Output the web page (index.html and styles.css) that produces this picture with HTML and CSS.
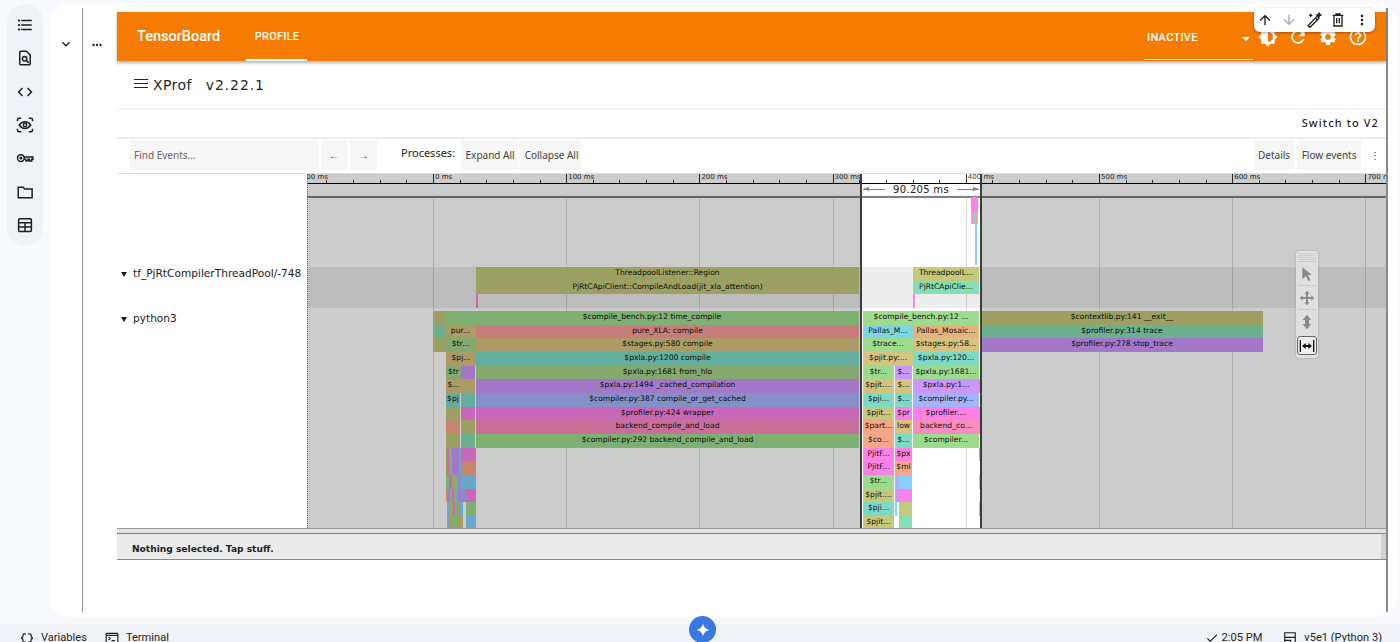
FILE: index.html
```html
<!DOCTYPE html>
<html lang="en">
<head>
    <meta charset="UTF-8">
    <meta name="viewport" content="width=device-width, initial-scale=1.0">
    <title>XProf trace viewer</title>
    <link rel="stylesheet" href="styles.css">
</head>
<body>

<div class="workspace">
    <nav class="rail">
        <svg viewBox="0 0 24 24"><path d="M4 10.5c-.83 0-1.5.67-1.5 1.5s.67 1.5 1.5 1.5 1.5-.67 1.5-1.5-.67-1.5-1.5-1.5zm0-6c-.83 0-1.5.67-1.5 1.5S3.17 7.5 4 7.5 5.5 6.83 5.5 6 4.83 4.5 4 4.5zm0 12c-.83 0-1.5.68-1.5 1.5s.68 1.5 1.5 1.5 1.5-.68 1.5-1.5-.67-1.5-1.5-1.5zM7 19h14v-2H7v2zm0-6h14v-2H7v2zm0-8v2h14V5H7z"/></svg>
        <svg viewBox="0 0 24 24" class="line"><path d="M14 3H6.5A1.5 1.5 0 0 0 5 4.5v15A1.5 1.5 0 0 0 6.5 21h11a1.5 1.5 0 0 0 1.5-1.5V8z"/><circle cx="11.5" cy="13" r="3"/><path d="M14 15.5l3 3"/></svg>
        <svg viewBox="0 0 24 24"><path d="M9.4 16.6L4.8 12l4.6-4.6L8 6l-6 6 6 6 1.4-1.4zm5.2 0l4.6-4.6-4.6-4.6L16 6l6 6-6 6-1.4-1.4z"/></svg>
        <svg viewBox="0 0 24 24" class="line"><path d="M2 7V5a2 2 0 0 1 2-2h3M17 3h3a2 2 0 0 1 2 2v2M22 17v2a2 2 0 0 1-2 2h-3M7 21H4a2 2 0 0 1-2-2v-2"/><path d="M4.500 12c1.800-3 4.500-4.500 7.500-4.500s5.700 1.500 7.500 4.500c-1.800 3-4.500 4.500-7.500 4.500S6.300 15 4.500 12z"/><circle cx="12" cy="12" r="2.200"/></svg>
        <svg viewBox="0 0 24 24" class="line"><circle cx="6.500" cy="12" r="4.500"/><circle cx="6.500" cy="12" r="1"/><path d="M11 10.500h11.500v3H21v2.500h-3v-2.500h-2v2h-3v-2h-2"/></svg>
        <svg viewBox="0 0 24 24" class="line"><path d="M3 5.500h6.500l2 2.500H21.500v11.500H3z"/></svg>
        <svg viewBox="0 0 24 24" class="line"><rect x="3.500" y="3.500" width="17" height="17" rx="1.500"/><path d="M3.500 9h17M3.500 14.800h17M12 9v11.500"/></svg>
    </nav>

    <main class="notebook">
        <div class="cell-gutter">
            <svg viewBox="0 0 24 24"><path d="M16.59 8.59L12 13.17 7.41 8.59 6 10l6 6 6-6z"/></svg>
        </div>
        <div class="cell-body">
            <div class="cell-menu">
                <svg viewBox="0 0 24 24"><path d="M6 10c-1.100 0-2 .9-2 2s.9 2 2 2 2-.9 2-2-.9-2-2-2zm12 0c-1.100 0-2 .9-2 2s.9 2 2 2 2-.9 2-2-.9-2-2-2zm-6 0c-1.100 0-2 .9-2 2s.9 2 2 2 2-.9 2-2-.9-2-2-2z"/></svg>
            </div>
            <div class="output">
                <header class="tb-bar">
                    <span class="tb-logo">TensorBoard</span>
                    <span class="tb-tab">PROFILE</span>
                    <span class="tb-select">INACTIVE<i class="caret"></i></span>
                    <div class="tb-icons">
                        <svg viewBox="0 0 24 24"><path d="M20 15.31L23.31 12 20 8.69V4h-4.690L12 .69 8.690 4H4v4.690L.69 12 4 15.31V20h4.690L12 23.31 15.31 20H20v-4.690zM12 18V6c3.310 0 6 2.690 6 6s-2.690 6-6 6z"/></svg>
                        <svg viewBox="0 0 24 24"><path d="M17.65 6.35C16.2 4.9 14.21 4 12 4c-4.42 0-7.99 3.58-7.99 8s3.57 8 7.99 8c3.73 0 6.84-2.55 7.73-6h-2.08c-.82 2.33-3.04 4-5.65 4-3.31 0-6-2.69-6-6s2.69-6 6-6c1.66 0 3.14.69 4.22 1.78L13 11h7V4l-2.35 2.35z"/></svg>
                        <svg viewBox="0 0 24 24"><path d="M19.14 12.94c.04-.3.06-.61.06-.94 0-.32-.02-.64-.07-.94l2.03-1.58c.18-.14.23-.41.12-.61l-1.92-3.32c-.12-.22-.37-.29-.59-.22l-2.39.96c-.5-.38-1.03-.7-1.62-.94l-.36-2.54c-.04-.24-.24-.41-.48-.41h-3.84c-.24 0-.43.17-.47.41l-.36 2.54c-.59.24-1.13.57-1.62.94l-2.39-.96c-.22-.08-.47 0-.59.22L2.74 8.87c-.12.21-.08.47.12.61l2.03 1.58c-.05.3-.09.63-.09.94s.02.64.07.94l-2.03 1.58c-.18.14-.23.41-.12.61l1.92 3.32c.12.22.37.29.59.22l2.39-.96c.5.38 1.03.7 1.62.94l.36 2.54c.05.24.24.41.48.41h3.84c.24 0 .44-.17.47-.41l.36-2.54c.59-.24 1.13-.56 1.62-.94l2.39.96c.22.08.47 0 .59-.22l1.92-3.32c.12-.22.07-.47-.12-.61l-2.01-1.58zM12 15.6c-1.98 0-3.6-1.62-3.6-3.6s1.62-3.6 3.6-3.6 3.6 1.62 3.6 3.6-1.62 3.6-3.6 3.6z"/></svg>
                        <svg viewBox="0 0 24 24"><path d="M11 18h2v-2h-2v2zm1-16C6.48 2 2 6.48 2 12s4.48 10 10 10 10-4.48 10-10S17.52 2 12 2zm0 18c-4.41 0-8-3.59-8-8s3.59-8 8-8 8 3.59 8 8-3.59 8-8 8zm0-14c-2.21 0-4 1.79-4 4h2c0-1.1.9-2 2-2s2 .9 2 2c0 2-3 1.75-3 5h2c0-2.25 3-2.5 3-5 0-2.21-1.79-4-4-4z"/></svg>
                    </div>
                </header>

                <div class="xprof-title">
                    <i class="hamburger"></i>
                    <span>XProf</span>
                    <span class="xprof-version">v2.22.1</span>
                </div>

                <div class="switch-row">Switch to V2</div>

                <div class="trace-tools">
                    <span class="find-box">Find Events...</span>
                    <span class="tool-btn arrow-btn">←</span>
                    <span class="tool-btn arrow-btn next">→</span>
                    <span class="processes">Processes:</span>
                    <span class="tool-btn expand">Expand All</span>
                    <span class="tool-btn collapse">Collapse All</span>
                    <span class="tool-btn details">Details</span>
                    <span class="tool-btn flow">Flow events</span>
                    <span class="tool-more">⋮</span>
                </div>

                <div class="timeline">
                    <div class="track-labels">
                        <div class="label-row first"></div>
                        <div class="label-row tf"><i class="twisty"></i>tf_PjRtCompilerThreadPool/-748</div>
                        <div class="label-row py"><i class="twisty"></i>python3</div>
                    </div>
                    <div class="canvas" id="canvas">
                        <div class="ruler-layer" id="ruler"></div>
                        <div class="grid-layer" id="grid"></div>
                        <div class="ruler-band"></div>
                        <div class="track top" id="trackTop"></div>
                        <div class="track tf" id="trackTf"></div>
                        <div class="track py" id="trackPy"></div>
                        <div class="dim dim-left"></div>
                        <div class="dim dim-right"></div>
                        <div class="sel-line sel-a"></div>
                        <div class="sel-line sel-b"></div>
                        <div class="measure">
                            <i class="measure-arrow"></i>
                            <span>90.205 ms</span>
                            <i class="measure-arrow flip"></i>
                        </div>
                        <div class="start-line"></div>
                        <div class="mouse-tools">
                            <div class="grip"></div>
                            <div class="mouse-btn">
                                <svg viewBox="0 0 24 24"><path d="M5 2l14 11-5.500 1 3.500 7-3 1.500-3.500-7.500L5 20z"/></svg>
                            </div>
                            <div class="mouse-btn">
                                <svg viewBox="0 0 24 24"><path d="M12 1l4 4.500h-2.500v5h5V8l4.500 4-4.500 4v-2.500h-5v5H16L12 23l-4-4.500h2.500v-5h-5V16L1 12l4.500-4v2.500h5v-5H8z"/></svg>
                            </div>
                            <div class="mouse-btn">
                                <svg viewBox="0 0 24 24"><path d="M12 1l6.500 8H15v6h3.500L12 23l-6.500-8H9V9H5.500z"/></svg>
                            </div>
                            <div class="mouse-btn active">
                                <svg viewBox="0 0 24 24"><path d="M1 3h2v18H1zM21 3h2v18h-2zM4.500 12L10 7.500V10.500h4V7.500l5.500 4.500-5.500 4.500v-3h-4v3z"/></svg>
                            </div>
                        </div>
                    </div>
                </div>

                <div class="detail-pane">
                    <div class="detail-split"></div>
                    <div class="detail-body">
                        <span>Nothing selected. Tap stuff.</span>
                        <i class="detail-scroll"></i>
                    </div>
                </div>

                <div class="cell-toolbar">
                    <svg viewBox="0 0 24 24"><path d="M4 12l1.410 1.410L11 7.830V20h2V7.830l5.580 5.590L20 12l-8-8-8 8z"/></svg>
                    <svg viewBox="0 0 24 24" class="off"><path d="M20 12l-1.410-1.410L13 16.170V4h-2v12.170l-5.580-5.590L4 12l8 8 8-8z"/></svg>
                    <svg viewBox="0 0 24 24" class="line"><path d="M3 20.500L16.500 6.500l3 3L6 23zM14 9l3 3M19.500 1.500l.8 2.200 2.200.8-2.200.8-.8 2.200-.8-2.200-2.200-.8 2.200-.8zM7 2.500v5M4.500 5h5"/></svg>
                    <svg viewBox="0 0 24 24" class="line"><path d="M4 5h16M9 5V3h6v2M6 5v16h12V5M10 9v8M14 9v8"/></svg>
                    <svg viewBox="0 0 24 24"><path d="M12 8c1.100 0 2-.9 2-2s-.9-2-2-2-2 .9-2 2 .9 2 2 2zm0 2c-1.100 0-2 .9-2 2s.9 2 2 2 2-.9 2-2-.9-2-2-2zm0 6c-1.100 0-2 .9-2 2s.9 2 2 2 2-.9 2-2-.9-2-2-2z"/></svg>
                </div>
            </div>
        </div>
    </main>
</div>

<footer class="status-bar">
    <span class="status-item">
        <svg viewBox="0 0 24 24"><path d="M4 7v2c0 .55-.45 1-1 1H2v4h1c.55 0 1 .45 1 1v2c0 1.650 1.350 3 3 3h3v-2H7c-.55 0-1-.45-1-1v-2c0-1.300-.84-2.420-2-2.830v-.34C5.160 11.420 6 10.300 6 9V7c0-.55.45-1 1-1h3V4H7C5.350 4 4 5.350 4 7zM21 10c-.55 0-1-.45-1-1V7c0-1.650-1.350-3-3-3h-3v2h3c.55 0 1 .45 1 1v2c0 1.300.84 2.420 2 2.830v.34c-1.160.41-2 1.520-2 2.830v2c0 .55-.45 1-1 1h-3v2h3c1.650 0 3-1.350 3-3v-2c0-.55.45-1 1-1h1v-4h-1z"/></svg>
        Variables
    </span>
    <span class="status-item">
        <svg viewBox="0 0 24 24" class="line"><rect x="2" y="4" width="20" height="16" rx="1"/><path d="M2 7.500h20" /><path d="M6 10.500l3 2.500-3 2.500M11 16.500h6"/></svg>
        Terminal
    </span>
    <span class="status-spacer"></span>
    <span class="status-item check">
        <svg viewBox="0 0 24 24"><path d="M9 16.170L4.830 12l-1.420 1.410L9 19 21 7l-1.410-1.410z"/></svg>
        2:05 PM
    </span>
    <span class="status-item kernel">
        <svg viewBox="0 0 24 24" class="line"><path d="M3 3h18v8H3zM3 11v10M21 11v10M3 16h10v5H3zM6.500 7h.01M6.500 18.500h.01"/></svg>
        v5e1 (Python 3)
    </span>
</footer>

<div class="gemini-btn">
    <svg viewBox="0 0 24 24"><path d="M12 2c.6 5.400 4.600 9.400 10 10-5.400.6-9.400 4.600-10 10-.6-5.400-4.600-9.400-10-10 5.400-.6 9.400-4.600 10-10z"/></svg>
</div>

<script src="timeline.js"></script>

</body>
</html>
```

FILE: styles.css
```css
* {
    box-sizing: border-box;
}

body {
    font-family: 'Noto Sans', sans-serif;
    background-color: #f8fafd;
    margin: 0;
    padding: 0;
    width: 1400px;
    height: 642px;
    overflow: hidden;
    position: relative;
    color: #1f1f1f;
    display: flex;
    flex-direction: column;
}

svg {
    display: block;
    fill: currentColor;
}

svg.line {
    fill: none;
    stroke: currentColor;
    stroke-width: 2;
}

.workspace {
    display: flex;
    align-items: flex-start;
    height: 624px;
    padding-top: 4px;
}

/* Left icon rail */
.rail {
    width: 36px;
    height: 242px;
    margin-left: 7px;
    background-color: #eff3f8;
    border-radius: 18px;
    display: flex;
    flex-direction: column;
    align-items: center;
    justify-content: space-between;
    padding: 12px 0;
}

.rail svg {
    width: 18px;
    height: 18px;
}

/* Notebook card */
.notebook {
    width: 1348px;
    height: 613px;
    margin-left: 6px;
    background-color: #ffffff;
    border-radius: 20px;
    padding: 4px 0 5px;
    display: flex;
}

.cell-gutter {
    width: 33px;
    display: flex;
    justify-content: center;
    padding: 28px 0 0 1px;
}

.cell-gutter svg {
    width: 16px;
    height: 16px;
}

.cell-body {
    display: flex;
    width: 1306px;
    border-left: 1px solid #8a8a8a;
    border-right: 2px solid #8a8a8a;
}

.cell-menu {
    width: 34px;
    display: flex;
    justify-content: center;
    padding: 30px 6px 0 0;
}

.cell-menu svg {
    width: 14px;
    height: 14px;
}

.output {
    width: 1269px;
    padding-top: 4px;
    position: relative;
}

/* TensorBoard header */
.tb-bar {
    height: 49px;
    background-color: #f57c00;
    box-shadow: 0 2px 3px rgba(0, 0, 0, 0.3);
    color: #ffffff;
    display: flex;
    align-items: center;
    font-family: 'Roboto', sans-serif;
    position: relative;
}

.tb-logo {
    font-size: 14.500px;
    font-weight: 500;
    margin-left: 20px;
    width: 109px;
}

.tb-tab {
    height: 49px;
    width: 61px;
    font-size: 11px;
    font-weight: 500;
    letter-spacing: 0.2px;
    line-height: 50px;
    text-align: center;
    padding-left: 1px;
    border-bottom: 2px solid #ffffff;
}

.tb-select {
    width: 109px;
    height: 46px;
    margin: 0 0 0 837px;
    padding-left: 3px;
    font-size: 11px;
    font-weight: 500;
    letter-spacing: 0.3px;
    line-height: 48px;
    border-bottom: 1px solid #ffffff;
    position: relative;
}

.caret {
    position: absolute;
    right: 3px;
    top: 23px;
    border-left: 4px solid transparent;
    border-right: 4px solid transparent;
    border-top: 4px solid #ffffff;
}

.tb-icons {
    display: flex;
    gap: 10px;
    margin-left: 5px;
}

.tb-icons svg {
    width: 20px;
    height: 20px;
}

/* XProf title row */
.xprof-title {
    height: 49px;
    display: flex;
    align-items: center;
    padding: 0 0 0 17px;
    font-family: 'DejaVu Sans', sans-serif;
    font-size: 14px;
    letter-spacing: 0.4px;
    border-bottom: 2px solid #f3f3f3;
}

.hamburger {
    width: 14px;
    height: 9px;
    margin: 0 5px 3px 0;
    border-top: 1px solid #222222;
    border-bottom: 1px solid #222222;
    position: relative;
}

.hamburger::after {
    content: '';
    position: absolute;
    left: 0;
    right: 0;
    top: 3px;
    border-top: 1px solid #222222;
}

.xprof-version {
    margin-left: 14px;
    letter-spacing: 0.9px;
}

.switch-row {
    height: 29px;
    padding: 5px 7px 0 0;
    text-align: right;
    font-size: 11px;
    font-weight: 500;
    letter-spacing: 1.1px;
    border-bottom: 2px solid #ededed;
}

/* Trace viewer toolbar */
.trace-tools {
    height: 35px;
    padding: 1px 0 3px 13px;
    display: flex;
    align-items: stretch;
    font-size: 10px;
    color: #444444;
    border-bottom: 1px solid #dddddd;
}

.find-box {
    width: 189px;
    padding-left: 4px;
    line-height: 31px;
    background-color: #f6f6f6;
    color: #666666;
}

.tool-btn {
    background-color: #f6f6f6;
    text-align: center;
    line-height: 31px;
}

.arrow-btn {
    width: 26px;
    margin-left: 2px;
    font-weight: 700;
    color: #333333;
}

.arrow-btn.next {
    margin-left: 3px;
    width: 27px;
}

.processes {
    margin: 0 6px 0 24px;
    font-size: 11px;
    line-height: 25px;
    color: #222222;
}

.expand {
    width: 57px;
    padding-left: 1px;
}

.collapse {
    width: 62px;
    margin-left: 1px;
    padding-left: 3px;
}

.details {
    width: 40px;
    margin-left: 673px;
}

.flow {
    width: 64px;
    margin-left: 3px;
}

.tool-more {
    margin-left: 9px;
    line-height: 31px;
}

/* Timeline */
.timeline {
    display: flex;
    height: 354px;
}

.track-labels {
    width: 190px;
    flex: none;
    font-family: 'DejaVu Sans', sans-serif;
    font-size: 10.600px;
    color: #1a1a1a;
}

.label-row {
    padding-left: 16px;
    position: relative;
}

.label-row.first {
    height: 93px;
}

.label-row.tf {
    height: 45px;
}

.twisty {
    position: absolute;
    left: 4px;
    top: 5px;
    border-left: 3px solid transparent;
    border-right: 3px solid transparent;
    border-top: 5px solid #1a1a1a;
}

.canvas {
    flex: 1;
    position: relative;
    overflow: hidden;
    display: flex;
    flex-direction: column;
    padding-top: 24px;
}

.start-line {
    position: absolute;
    left: 0;
    top: 0;
    bottom: 0;
    border-left: 1px dotted #1a8fa8;
}

.ruler-layer {
    position: absolute;
    left: 0;
    right: 0;
    top: 0;
    height: 10px;
    border-bottom: 1px solid #000000;
}

.tick {
    position: absolute;
    bottom: 0;
    height: 3px;
    border-left: 1px solid #333333;
}

.tick.major {
    height: 9px;
}

.tick-label {
    position: absolute;
    top: -1px;
    font-family: 'DejaVu Sans', sans-serif;
    font-size: 7px;
    line-height: 9px;
    color: #333333;
    white-space: nowrap;
}

.ruler-band {
    position: absolute;
    left: 0;
    right: 0;
    top: 21px;
    height: 3px;
    background-color: #808080;
    border-top: 1px solid #f6f6f6;
}

.grid-layer {
    position: absolute;
    left: 0;
    right: 0;
    top: 24px;
    bottom: 0;
}

.grid-line {
    position: absolute;
    top: 0;
    bottom: 0;
    border-left: 1px solid #dcdcdc;
}

.track {
    position: relative;
    flex: none;
}

.track.top {
    height: 69px;
}

.track.tf {
    height: 41px;
    background-color: rgba(0, 0, 0, 0.07);
}

.track.py {
    height: 220px;
}

.slice {
    position: absolute;
    overflow: hidden;
    white-space: nowrap;
    text-align: center;
    font-family: 'DejaVu Sans', sans-serif;
    font-size: 7.600px;
    line-height: 11px;
    color: #111111;
}

.dim {
    position: absolute;
    top: 0;
    bottom: 0;
    background-color: rgba(0, 0, 0, 0.2);
}

.dim-left {
    left: 0;
    width: 554px;
}

.dim-right {
    left: 674px;
    right: 0;
}

.sel-line {
    position: absolute;
    top: 0;
    bottom: 0;
    width: 2px;
    background-color: #3c3c3c;
}

.sel-a {
    left: 553px;
}

.sel-b {
    left: 673px;
}

.measure {
    position: absolute;
    left: 556px;
    width: 116px;
    top: 9px;
    height: 13px;
    display: flex;
    align-items: center;
    justify-content: space-between;
    font-family: 'DejaVu Sans', sans-serif;
    font-size: 10px;
    letter-spacing: 0.3px;
    color: #222222;
}

.measure-arrow {
    width: 22px;
    border-top: 1px solid #808080;
    position: relative;
}

.measure-arrow::before {
    content: '';
    position: absolute;
    left: 0;
    top: -3px;
    border-top: 2px solid transparent;
    border-bottom: 2px solid transparent;
    border-right: 6px solid #808080;
}

.measure-arrow.flip {
    transform: scaleX(-1);
}

/* Mouse mode selector floats over the tracks */
.mouse-tools {
    position: absolute;
    left: 989px;
    top: 77px;
    width: 22px;
    height: 107px;
    background-color: #e0e0e0;
    border-radius: 3px;
    box-shadow: 0 0 2px rgba(0, 0, 0, 0.25);
    padding: 2px;
}

.grip {
    height: 7px;
    margin-bottom: 1px;
    background: repeating-linear-gradient(#cfcfcf 0 1px, #e0e0e0 1px 2px);
}

.mouse-btn {
    height: 24px;
    color: #8a8a8a;
    display: flex;
    align-items: center;
    justify-content: center;
    border-top: 1px solid #cccccc;
}

.mouse-btn svg {
    width: 16px;
    height: 16px;
}

.mouse-btn.active {
    color: #111111;
    height: 19px;
    border: 1px solid #666666;
    border-radius: 3px;
    margin: 3px -1px 0;
    background-color: #eeeeee;
}

/* Bottom detail pane */
.detail-split {
    height: 6px;
    background-color: #e2e2e2;
    border-top: 1px solid #999999;
    border-bottom: 1px solid #808080;
}

.detail-body {
    height: 26px;
    background-color: #ebebeb;
    border-bottom: 1px solid #8a8a8a;
    padding-left: 15px;
    font-family: 'DejaVu Sans', sans-serif;
    font-size: 9.100px;
    font-weight: 700;
    line-height: 30px;
    position: relative;
}

.detail-scroll {
    position: absolute;
    right: 0;
    top: 0;
    bottom: 0;
    width: 5px;
    background-color: #d2d2d2;
}

/* Cell toolbar hovers over the header */
.cell-toolbar {
    position: absolute;
    left: 1137px;
    top: 0;
    width: 121px;
    height: 24px;
    background-color: #ffffff;
    border-radius: 6px;
    box-shadow: 0 1px 3px rgba(0, 0, 0, 0.35);
    display: flex;
    align-items: center;
    justify-content: space-between;
    padding: 0 5px 0 3px;
    color: #1f1f1f;
}

.cell-toolbar svg {
    width: 16px;
    height: 16px;
}

.cell-toolbar svg.off {
    color: #a8a8a8;
}

/* Status bar */
.status-bar {
    height: 18px;
    background-color: #eff2f7;
    display: flex;
    align-items: flex-start;
    padding: 7px 18px 0 20px;
    font-family: 'Roboto', sans-serif;
    font-size: 11.100px;
    line-height: 14px;
    gap: 18px;
    white-space: nowrap;
}

.status-item {
    display: flex;
    align-items: center;
    gap: 7px;
}

.status-item svg {
    width: 14px;
    height: 14px;
}

.status-item.check {
    gap: 3px;
}

.status-item.kernel {
    margin-left: 3px;
}

.status-spacer {
    flex: 1;
}

.gemini-btn {
    position: absolute;
    left: 689px;
    top: 616px;
    width: 27px;
    height: 27px;
    border-radius: 50%;
    background-color: #3a78e0;
    color: #ffffff;
    display: flex;
    align-items: center;
    justify-content: center;
}

.gemini-btn svg {
    width: 16px;
    height: 16px;
}
```

FILE: timeline.js
```js
// Trace data, in page pixels along the x axis. The canvas starts at x = 307.
const originX = 307;
const msZeroX = 433;
const pxPer100ms = 133.2;
const rowHeight = 13.67;

const colors = {
    olive: '#c4c97c',
    green: '#9ddc8e',
    leaf: '#a5d38a',
    mint: '#86deb2',
    teal: '#7cdac6',
    cyan: '#7dd6e2',
    sky: '#85d0ff',
    blue: '#a5b4fa',
    purple: '#cc97fa',
    magenta: '#fa82e6',
    pink: '#fa8cc0',
    red: '#fa9c9b',
    salmon: '#f5a887',
    tan: '#d6c380',
    orange: '#e8b27e'
};

// [row, x1, x2, color, label]
const pythonSlices = [
    [0, 433, 445, 'olive'], [0, 445, 859, 'green', '$compile_bench.py:12 time_compile'],
    [0, 863, 979, 'green', '$compile_bench.py:12 ...'], [0, 981, 1263, 'olive', '$contextlib.py:141 __exit__'],

    [1, 433, 445, 'mint'], [1, 445, 476, 'tan', 'pur...'], [1, 476, 859, 'red', 'pure_XLA: compile'],
    [1, 863, 913, 'cyan', 'Pallas_M...'], [1, 913, 979, 'orange', 'Pallas_Mosaic...'], [1, 981, 1263, 'mint', '$profiler.py:314 trace'],

    [2, 433, 445, 'olive'], [2, 445, 476, 'leaf', '$tr...'], [2, 476, 859, 'tan', '$stages.py:580 compile'],
    [2, 863, 913, 'green', '$trace...'], [2, 913, 979, 'tan', '$stages.py:58...'], [2, 981, 1263, 'purple', '$profiler.py:278 stop_trace'],

    [3, 446, 476, 'tan', '$pj...'], [3, 476, 859, 'teal', '$pxla.py:1200 compile'],
    [3, 863, 913, 'tan', '$pjit.py:...'], [3, 913, 979, 'teal', '$pxla.py:120...'],

    [4, 446, 461, 'leaf', '$tr'], [4, 461, 475, 'purple'], [4, 476, 859, 'leaf', '$pxla.py:1681 from_hlo'],
    [4, 863, 894, 'green', '$tr...'], [4, 895, 912, 'purple', '$...'], [4, 913, 979, 'green', '$pxla.py:1681...'],

    [5, 446, 461, 'tan', '$...'], [5, 461, 475, 'tan'], [5, 476, 859, 'purple', '$pxla.py:1494 _cached_compilation'],
    [5, 863, 894, 'tan', '$pjit....'], [5, 895, 912, 'tan', '$...'], [5, 913, 979, 'purple', '$pxla.py:1...'],

    [6, 446, 460, 'teal', '$pj'], [6, 461, 475, 'teal'], [6, 476, 859, 'blue', '$compiler.py:387 compile_or_get_cached'],
    [6, 863, 894, 'teal', '$pji...'], [6, 895, 912, 'teal', '$...'], [6, 913, 979, 'blue', '$compiler.py...'],

    [7, 446, 460, 'olive'], [7, 461, 475, 'magenta'], [7, 476, 859, 'magenta', '$profiler.py:424 wrapper'],
    [7, 863, 894, 'olive', '$pjit...'], [7, 895, 912, 'magenta', '$pr'], [7, 913, 979, 'magenta', '$profiler....'],

    [8, 446, 460, 'salmon'], [8, 461, 475, 'olive'], [8, 476, 859, 'pink', 'backend_compile_and_load'],
    [8, 863, 894, 'salmon', '$part...'], [8, 895, 912, 'tan', 'low'], [8, 913, 979, 'pink', 'backend_co...'],

    [9, 446, 460, 'olive'], [9, 461, 475, 'mint'], [9, 476, 859, 'green', '$compiler.py:292 backend_compile_and_load'],
    [9, 863, 894, 'salmon', '$co...'], [9, 895, 912, 'teal', '$...'], [9, 913, 979, 'green', '$compiler...'],

    [10, 446, 447, 'olive'], [10, 447, 449, 'magenta'], [10, 449, 451, 'green'], [10, 451, 452, 'olive'], [10, 452, 459, 'purple'], [10, 459, 461, 'sky'],
    [10, 461, 476, 'magenta'], [10, 863, 894, 'magenta', 'PjitF...'], [10, 895, 912, 'magenta', '$px'],

    [11, 446, 447, 'olive'], [11, 447, 449, 'magenta'], [11, 449, 451, 'leaf'], [11, 451, 452, 'tan'], [11, 452, 459, 'purple'], [11, 459, 461, 'sky'],
    [11, 461, 476, 'salmon'], [11, 863, 894, 'magenta', 'PjitF...'], [11, 895, 912, 'salmon', '$ml'],

    [12, 446, 449, 'green'], [12, 449, 452, 'purple'], [12, 452, 455, 'tan'], [12, 455, 458, 'green'], [12, 458, 461, 'blue'],
    [12, 461, 476, 'sky'], [12, 863, 894, 'green', '$tr...'], [12, 895, 899, 'blue'], [12, 899, 912, 'sky'],

    [13, 446, 448, 'salmon'], [13, 448, 450, 'purple'], [13, 450, 452, 'green'], [13, 452, 454, 'magenta'], [13, 454, 456, 'olive'], [13, 456, 458, 'sky'], [13, 458, 461, 'purple'],
    [13, 461, 465, 'blue'], [13, 465, 476, 'magenta'], [13, 863, 894, 'olive', '$pjit....'], [13, 895, 899, 'purple'], [13, 899, 912, 'magenta'],

    [14, 447, 450, 'sky'], [14, 450, 453, 'olive'], [14, 453, 455, 'magenta'], [14, 455, 457, 'green'], [14, 457, 460, 'olive'], [14, 460, 463, 'sky'],
    [14, 466, 476, 'green'], [14, 863, 894, 'teal', '$pji...'], [14, 895, 897, 'sky'], [14, 899, 912, 'olive'],

    [15, 447, 450, 'sky'], [15, 450, 453, 'olive'], [15, 453, 457, 'green'], [15, 457, 460, 'olive'], [15, 460, 463, 'tan'],
    [15, 466, 476, 'sky'], [15, 863, 894, 'olive', '$pjit...'], [15, 899, 912, 'mint'],

    [5, 979, 981, 'purple'], [7, 979, 981, 'magenta'], [8, 979, 981, 'pink'], [10, 979, 981, 'red'], [12, 979, 981, 'olive'], [14, 979, 981, 'teal']
];

const tfSlices = [
    [0, 476, 859, 'olive', 'ThreadpoolListener::Region'],
    [1, 476, 859, 'olive', 'PjRtCApiClient::CompileAndLoad(jit_xla_attention)'],
    [2, 476, 478, 'magenta'],
    [0, 913, 979, 'olive', 'ThreadpoolL...'],
    [1, 913, 979, 'mint', 'PjRtCApiClie...'],
    [2, 913, 915, 'magenta']
];

const topSlices = [
    [0, 971, 978, 'magenta'],
    [1, 971, 972, 'green'], [1, 972, 973, 'pink'], [1, 973, 975, 'teal'], [1, 975, 977, 'red'], [1, 977, 978, 'green'],
    [2, 975, 977, 'sky'], [3, 975, 977, 'sky'], [4, 975, 977, 'sky']
];

function addSlices(trackId, slices, topPad) {
    const track = document.getElementById(trackId);
    slices.forEach(([row, x1, x2, color, label]) => {
        const slice = document.createElement('div');
        slice.className = 'slice';
        slice.style.left = `${x1 - originX}px`;
        slice.style.width = `${x2 - x1}px`;
        slice.style.top = `${topPad + row * rowHeight}px`;
        slice.style.height = `${rowHeight}px`;
        slice.style.backgroundColor = colors[color];
        if (label) slice.textContent = label;
        track.appendChild(slice);
    });
}

function drawRuler() {
    const ruler = document.getElementById('ruler');
    const grid = document.getElementById('grid');
    for (let i = -1; i <= 7; i++) {
        const major = msZeroX + i * pxPer100ms - originX;

        const tick = document.createElement('div');
        tick.className = 'tick major';
        tick.style.left = `${major}px`;
        ruler.appendChild(tick);

        const label = document.createElement('div');
        label.className = 'tick-label';
        label.style.left = `${major + 2}px`;
        label.textContent = i === 0 ? '0 ms' : `${Math.abs(i) * 100} ms`;
        ruler.appendChild(label);

        if (i >= 0) {
            const line = document.createElement('div');
            line.className = 'grid-line';
            line.style.left = `${major}px`;
            grid.appendChild(line);
        }

        for (let j = 1; j < 5; j++) {
            const minor = document.createElement('div');
            minor.className = 'tick';
            minor.style.left = `${major + j * pxPer100ms / 5}px`;
            ruler.appendChild(minor);
        }
    }
}

drawRuler();
addSlices('trackTop', topSlices, -1);
addSlices('trackTf', tfSlices, 0);
addSlices('trackPy', pythonSlices, 3);
```
